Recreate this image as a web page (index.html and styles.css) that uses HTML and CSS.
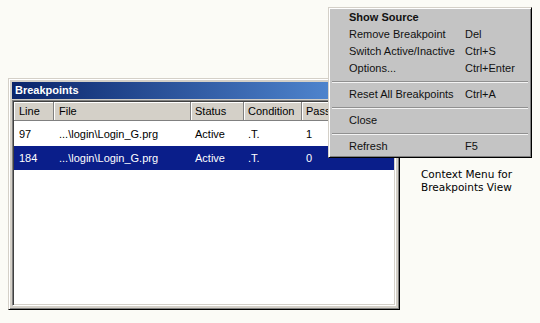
FILE: index.html
```html
<!DOCTYPE html>
<html>
<head>
<meta charset="utf-8">
<link rel="stylesheet" href="styles.css">
</head>
<body>
<div class="stage">
  <div class="window">
    <div class="titlebar">Breakpoints</div>
    <div class="list">
      <div class="row head">
        <div class="c c-line">Line</div>
        <div class="c c-file">File</div>
        <div class="c c-status">Status</div>
        <div class="c c-cond">Condition</div>
        <div class="c c-pass">Pass</div>
        <div class="c c-rest"></div>
      </div>
      <div class="row item">
        <div class="c c-line">97</div>
        <div class="c c-file">...\login\Login_G.prg</div>
        <div class="c c-status">Active</div>
        <div class="c c-cond">.T.</div>
        <div class="c c-pass">1</div>
      </div>
      <div class="row item selected">
        <div class="c c-line">184</div>
        <div class="c c-file">...\login\Login_G.prg</div>
        <div class="c c-status">Active</div>
        <div class="c c-cond">.T.</div>
        <div class="c c-pass">0</div>
      </div>
    </div>
  </div>
  <p class="caption">Context Menu for<br>Breakpoints View</p>
  <div class="menu">
    <div class="mi bold"><span class="lbl">Show Source</span><span class="key"></span></div>
    <div class="mi"><span class="lbl">Remove Breakpoint</span><span class="key">Del</span></div>
    <div class="mi"><span class="lbl">Switch Active/Inactive</span><span class="key">Ctrl+S</span></div>
    <div class="mi"><span class="lbl">Options...</span><span class="key">Ctrl+Enter</span></div>
    <div class="sep"></div>
    <div class="mi"><span class="lbl">Reset All Breakpoints</span><span class="key">Ctrl+A</span></div>
    <div class="sep"></div>
    <div class="mi"><span class="lbl">Close</span><span class="key"></span></div>
    <div class="sep"></div>
    <div class="mi"><span class="lbl">Refresh</span><span class="key">F5</span></div>
  </div>
</div>
</body>
</html>
```
FILE: styles.css
```css
html, body {
  margin: 0;
  padding: 0;
  background: #fbfbf6;
}
.stage {
  position: relative;
  display: flex;
  align-items: flex-start;
  width: 540px;
  height: 323px;
  box-sizing: border-box;
  padding: 78px 0 0 8px;
  font-family: "Liberation Sans", Arial, sans-serif;
  font-size: 11px;
  color: #000;
}
.window {
  width: 392px;
  height: 232px;
  box-sizing: border-box;
  border: 1px solid;
  border-color: #d4d0c8 #000 #000 #d4d0c8;
  box-shadow: inset 1px 1px #fff, inset -1px -1px #808080;
  background: #d4d0c8;
  padding: 3px;
  display: flex;
  flex-direction: column;
}
.titlebar {
  height: 17px;
  margin-bottom: 1px;
  background: linear-gradient(to right, #0a246a, #5c98e2);
  color: #fff;
  font-weight: bold;
  line-height: 17px;
  padding-left: 3px;
}
.list {
  flex: 1;
  background: #fff;
  border: 1px solid;
  border-color: #808080 #fff #fff #808080;
  box-shadow: inset 1px 1px #404040, inset -1px -1px #d4d0c8;
  padding: 1px;
}
.row {
  display: flex;
}
.head {
  height: 19px;
  background: #d4d0c8;
}
.head .c {
  box-sizing: border-box;
  line-height: 18px;
  border-right: 1px solid #808080;
  border-bottom: 1px solid #808080;
  box-shadow: inset 1px 1px #fff;
}
.head .c-rest {
  flex: 1;
  border-right: none;
}
.item {
  height: 24px;
  line-height: 24px;
  margin-top: 1px;
}
.item.selected {
  background: #0a1e8a;
  color: #fff;
  margin-top: 0;
}
.c {
  box-sizing: border-box;
  padding-left: 5px;
  white-space: nowrap;
  overflow: hidden;
}
.c-line { width: 40px; }
.c-file { width: 137px; }
.c-status { width: 53px; padding-left: 4px; }
.c-cond { width: 58px; padding-left: 4px; }
.c-pass { width: 60px; padding-left: 4px; }
.caption {
  margin: 90px 0 0 21px;
  font-family: "DejaVu Sans", Verdana, sans-serif;
  font-size: 10.5px;
  line-height: 13px;
  color: #000;
}
.menu {
  position: absolute;
  left: 328px;
  top: 7px;
  width: 204px;
  height: 151px;
  box-sizing: border-box;
  background: #c4c4c4;
  border: 1px solid;
  border-color: #d4d0c8 #000 #000 #d4d0c8;
  box-shadow: inset 1px 1px #fff, inset -1px -1px #808080;
  padding: 1px 2px;
}
.mi {
  display: flex;
  height: 17px;
  line-height: 17px;
  padding-left: 18px;
  color: #111;
}
.mi.bold {
  font-weight: bold;
}
.lbl {
  width: 116px;
}
.sep {
  height: 9px;
  box-sizing: border-box;
  padding: 4px 1px 0;
}
.sep::after {
  content: "";
  display: block;
  height: 1px;
  background: #909090;
  border-bottom: 1px solid #f4f4f4;
}
```
